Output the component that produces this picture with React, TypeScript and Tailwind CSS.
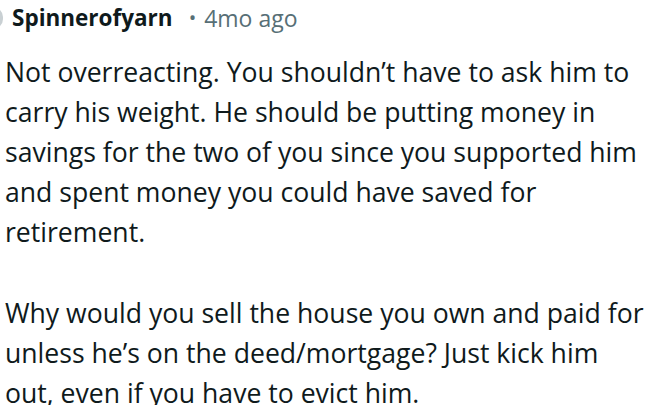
export default function App() {
  const para1 = [
    'Not overreacting. You shouldn\u2019t have to ask him to',
    'carry his weight. He should be putting money in',
    'savings for the two of you since you supported him',
    'and spent money you could have saved for',
    'retirement.',
  ]
  const para2 = [
    'Why would you sell the house you own and paid for',
    'unless he\u2019s on the deed/mortgage? Just kick him',
    'out, even if you have to evict him.',
  ]

  return (
    <div
      className="h-[405px] w-[655px] overflow-hidden bg-white text-[#0f1a1c]"
      style={{ fontFamily: '"Open Sans", "Noto Sans", sans-serif' }}
    >
      <div className="flex h-[36px] items-center">
        <div className="-ml-[17px] h-[22px] w-[20px] rounded-full bg-[#c9d0d3]" />
        <span className="ml-[9px] text-[22.5px] font-bold">Spinnerofyarn</span>
        <span className="ml-[16px] text-[20px] text-[#576f76]">•</span>
        <span className="ml-[8px] text-[23px] text-[#576f76]">4mo ago</span>
      </div>
      <div className="mt-[16px] pl-[5px] text-[26.6px] leading-[40px]">
        {para1.map((line) => (
          <div key={line} className="whitespace-nowrap">
            {line}
          </div>
        ))}
        <div className="mt-[41px]">
          {para2.map((line) => (
            <div key={line} className="whitespace-nowrap">
              {line}
            </div>
          ))}
        </div>
      </div>
    </div>
  )
}
